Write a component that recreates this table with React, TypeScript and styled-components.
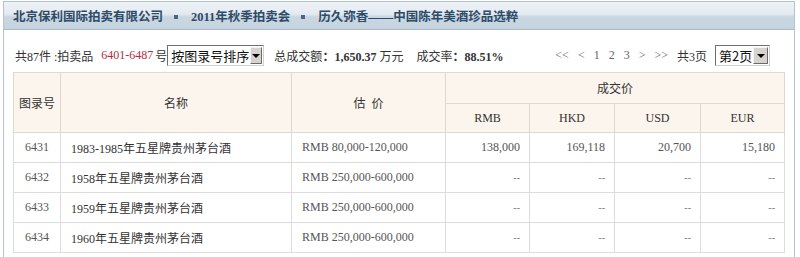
import React from "react";
import styled, { createGlobalStyle } from "styled-components";

const GlobalStyle = createGlobalStyle`
    html, body {
        margin: 0;
        padding: 0;
        background: #ffffff;
    }
    body {
        font-family: "Liberation Serif", "Noto Sans CJK SC", serif;
        font-size: 12px;
        color: #444;
    }
`;

const Panel = styled.div`
    margin: 1px 5px 0 3px;
    border: 1px solid #b3c3d0;
    border-bottom: none;
    background: #ffffff;
    height: 260px;
    overflow: hidden;
`;

const TitleBar = styled.div`
    height: 27px;
    display: flex;
    align-items: center;
    padding-left: 9px;
    background: linear-gradient(#eef3f7 0%, #e3eaf0 45%, #c9d7e2 55%, #c6d4df 100%);
    border-bottom: 1px solid #a9bac8;
    color: #2e4b68;
    font-size: 12.5px;
    font-weight: bold;
    white-space: nowrap;
`;

const TitleDot = styled.span`
    display: inline-block;
    width: 4px;
    height: 4px;
    background: #4a6683;
    margin: 2px 13px 0 11px;
`;

const Content = styled.div`
    padding: 15px 10px 0 9px;
`;

const Toolbar = styled.div`
    display: flex;
    align-items: center;
    height: 21px;
    padding: 0 14px 0 2px;
    margin-bottom: 6px;
    white-space: nowrap;
    color: #333;
    font-size: 12px;
`;

const Lots = styled.span`
    color: #b0303f;
    margin: 0 2px 0 8px;
`;

const Group = styled.div<{ $gap?: number; $push?: boolean }>`
    display: flex;
    align-items: center;
    margin-left: ${(p) => (p.$push ? "auto" : `${p.$gap ?? 0}px`)};
`;

const Strong = styled.b`
    font-weight: bold;
    color: #333;
`;

const PageLink = styled.span`
    color: #666;
    margin-right: 9px;
    font-size: 12px;
`;

const PageCount = styled.span`
    margin-right: 8px;
`;

const FakeSelect = styled.div<{ $w: number }>`
    width: ${(p) => p.$w}px;
    height: 19px;
    display: flex;
    align-items: stretch;
    border: 1px solid #6f6f6f;
    border-right-color: #d0d0d0;
    border-bottom-color: #d0d0d0;
    background: #fff;
    box-sizing: content-box;
    font-family: "Noto Sans CJK SC", sans-serif;
    font-size: 13px;
    color: #111;
`;

const SelectText = styled.span`
    flex: 1;
    display: flex;
    align-items: center;
    padding-left: 3px;
    line-height: 1;
`;

const SelectBtn = styled.span`
    width: 15px;
    margin: 1px;
    display: flex;
    align-items: center;
    justify-content: center;
    background: #d6d3ce;
    border: 1px solid;
    border-color: #f4f4f4 #6b6b6b #6b6b6b #f4f4f4;
    box-sizing: border-box;

    &::after {
        content: "";
        border-left: 4px solid transparent;
        border-right: 4px solid transparent;
        border-top: 4px solid #000;
    }
`;

const Table = styled.table`
    width: 771px;
    border-collapse: collapse;
    table-layout: fixed;
`;

const Th = styled.th<{ $h?: number }>`
    height: ${(p) => p.$h ?? 28}px;
    padding: 0;
    background: #fcf5ed;
    border: 1px solid #dcd9d5;
    font-weight: normal;
    font-size: 12px;
    color: #333;
    text-align: center;
`;

const Td = styled.td<{ $align?: "left" | "right" | "center"; $flush?: boolean }>`
    height: 29px;
    padding: ${(p) => (p.$flush ? "0" : "0 9px 0 10px")};
    border: 1px solid #dcdcdc;
    text-align: ${(p) => p.$align ?? "left"};
    color: #555;
    font-size: 12px;
    white-space: nowrap;
    overflow: hidden;
`;

const NameText = styled.span`
    color: #333;
`;

const Dash = styled.span`
    color: #777;
    font-size: 10px;
`;

type Lot = {
    no: string;
    name: string;
    estimate: string;
    prices: string[] | null;
};

const lots: Lot[] = [
    { no: "6431", name: "1983-1985年五星牌贵州茅台酒", estimate: "RMB 80,000-120,000", prices: ["138,000", "169,118", "20,700", "15,180"] },
    { no: "6432", name: "1958年五星牌贵州茅台酒", estimate: "RMB 250,000-600,000", prices: null },
    { no: "6433", name: "1959年五星牌贵州茅台酒", estimate: "RMB 250,000-600,000", prices: null },
    { no: "6434", name: "1960年五星牌贵州茅台酒", estimate: "RMB 250,000-600,000", prices: null },
];

const colWidths = [47, 231, 154, 84, 85, 86, 84];

export default function App() {
    return (
        <>
            <GlobalStyle />
            <Panel>
                <TitleBar>
                    北京保利国际拍卖有限公司<TitleDot />2011年秋季拍卖会<TitleDot />历久弥香——中国陈年美酒珍品选粹
                </TitleBar>
                <Content>
                    <Toolbar>
                        <span>共87件 :拍卖品</span>
                        <Lots>6401-6487</Lots>
                        <span>号</span>
                        <FakeSelect $w={95}>
                            <SelectText>按图录号排序</SelectText>
                            <SelectBtn />
                        </FakeSelect>
                        <Group $gap={10}>
                            总成交额<Strong>：1,650.37</Strong>&nbsp;万元
                        </Group>
                        <Group $gap={13}>
                            成交率<Strong>：88.51%</Strong>
                        </Group>
                        <Group $push>
                            <PageLink>&lt;&lt;</PageLink>
                            <PageLink>&lt;</PageLink>
                            <PageLink>1</PageLink>
                            <PageLink>2</PageLink>
                            <PageLink>3</PageLink>
                            <PageLink>&gt;</PageLink>
                            <PageLink>&gt;&gt;</PageLink>
                            <PageCount>共3页</PageCount>
                            <FakeSelect $w={53}>
                                <SelectText>第2页</SelectText>
                                <SelectBtn />
                            </FakeSelect>
                        </Group>
                    </Toolbar>
                    <Table>
                        <colgroup>
                            {colWidths.map((w, i) => (
                                <col key={i} width={w} />
                            ))}
                        </colgroup>
                        <thead>
                            <tr>
                                <Th rowSpan={2}>图录号</Th>
                                <Th rowSpan={2}>名称</Th>
                                <Th rowSpan={2}>估&nbsp;&nbsp;价</Th>
                                <Th colSpan={4} $h={30}>成交价</Th>
                            </tr>
                            <tr>
                                <Th>RMB</Th>
                                <Th>HKD</Th>
                                <Th>USD</Th>
                                <Th>EUR</Th>
                            </tr>
                        </thead>
                        <tbody>
                            {lots.map((lot) => (
                                <tr key={lot.no}>
                                    <Td $align="center" $flush>{lot.no}</Td>
                                    <Td><NameText>{lot.name}</NameText></Td>
                                    <Td>{lot.estimate}</Td>
                                    {(lot.prices ?? ["--", "--", "--", "--"]).map((p, i) => (
                                        <Td key={i} $align="right">
                                            {lot.prices ? p : <Dash>--</Dash>}
                                        </Td>
                                    ))}
                                </tr>
                            ))}
                        </tbody>
                    </Table>
                </Content>
            </Panel>
        </>
    );
}
